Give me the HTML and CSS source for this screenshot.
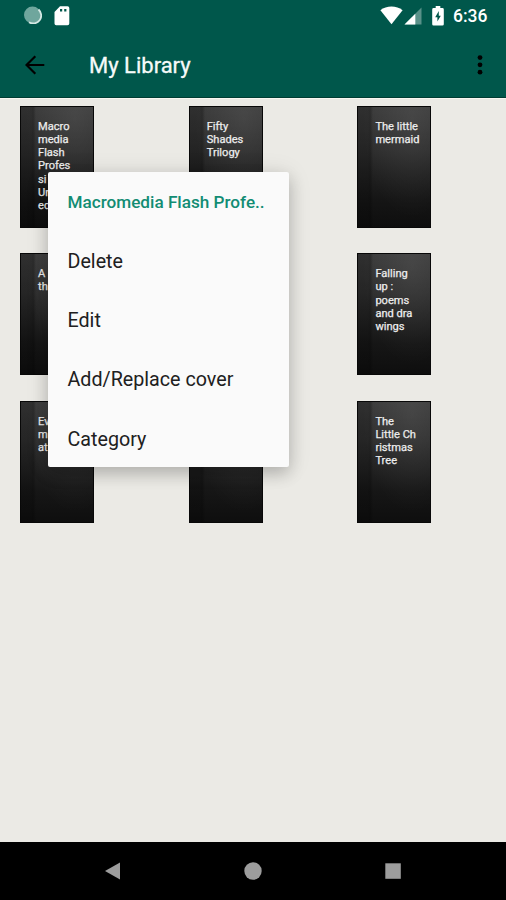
FILE: index.html
```html
<!DOCTYPE html>
<html lang="en">
<head>
<meta charset="utf-8">
<title>My Library</title>
<link rel="stylesheet" href="styles.css">
</head>
<body>
<div class="screen">
  <header class="header">
    <div class="status">
      <svg class="sync" width="18" height="18" viewBox="0 0 18 18"><circle cx="8.500" cy="9" r="8.500" fill="#6fa69d"/><path d="M14.500 3.500A8 8 0 0 1 5 16.300" fill="none" stroke="#d5e8e4" stroke-width="1.800"/></svg>
      <svg class="card" width="16" height="20" viewBox="0 0 16 20"><path fill="#fff" fill-rule="evenodd" d="M6 .3h7.500Q15.300.3 15.300 2v15.500Q15.300 19.300 13.500 19.300H2.200Q.5 19.300.5 17.500V6zM6 3v2.600h2.200V3zM10.200 3v2.600h2.200V3z"/></svg>
      <span class="spacer"></span>
      <svg class="wifi" width="23" height="19" viewBox="0 0 23 19"><path fill="#fff" d="M.4 4.200C6.500-.8 16.500-.8 22.600 4.200L11.500 18.200z"/></svg>
      <svg class="signal" width="18" height="18" viewBox="0 0 18 18"><path fill="#fff" fill-opacity=".35" d="M17.500.5v17H.5z"/><path fill="#fff" d="M11.300 6.700v10.800H.5z"/></svg>
      <svg class="battery" width="12" height="20" viewBox="0 0 12 20"><path fill="#fff" d="M3.700 0h4.600v2H10.400Q11.800 2 11.800 3.400v14.800Q11.800 19.500 10.400 19.500H1.600Q.2 19.500.2 18.200V3.400Q.2 2 1.600 2h2.100z"/><path fill="#00574b" d="M6.800 5 3.200 11.200h2.200V15.500L8.800 9.800H6.800z"/></svg>
      <span class="clock">6:36</span>
    </div>
    <div class="toolbar">
      <svg class="back" width="20" height="20" viewBox="0 0 20 20"><path d="M19.300 10H1.800M10.300 1.200 1.500 10l8.800 8.800" fill="none" stroke="#000" stroke-width="2.200"/></svg>
      <h1 class="title">My Library</h1>
      <svg class="more" width="6" height="20" viewBox="0 0 6 20"><circle cx="3" cy="2.600" r="2.400"/><circle cx="3" cy="9.800" r="2.400"/><circle cx="3" cy="17.200" r="2.400"/></svg>
    </div>
  </header>
  <main class="library">
    <div class="book">Macro<br>media<br>Flash<br>Profes<br>si<br>Un<br>ed</div>
    <div class="book">Fifty<br>Shades<br>Trilogy</div>
    <div class="book">The little<br>mermaid</div>
    <div class="book">A<br>th</div>
    <div class="book"></div>
    <div class="book">Falling<br>up :<br>poems<br>and dra<br>wings</div>
    <div class="book">Ev<br>m<br>at</div>
    <div class="book"></div>
    <div class="book">The<br>Little Ch<br>ristmas<br>Tree</div>
  </main>
  <nav class="navbar">
    <svg width="18" height="18" viewBox="0 0 18 18"><path d="M1 9 16 .5v17z"/></svg>
    <svg width="18" height="18" viewBox="0 0 18 18"><circle cx="9" cy="9" r="8.700"/></svg>
    <svg width="18" height="18" viewBox="0 0 18 18"><path d="M1.300 1.300h15.500v15.500H1.300z"/></svg>
  </nav>
  <div class="menu">
    <div class="item heading"><span>Macromedia Flash Profe..</span></div>
    <div class="item"><span>Delete</span></div>
    <div class="item"><span>Edit</span></div>
    <div class="item"><span>Add/Replace cover</span></div>
    <div class="item"><span>Category</span></div>
  </div>
</div>
</body>
</html>
```
FILE: styles.css
```css
* { box-sizing: border-box; }
body { margin: 0; font-family: Roboto, "Liberation Sans", sans-serif; }
svg { display: block; flex: none; }
.screen {
  position: relative;
  display: flex;
  flex-direction: column;
  width: 506px;
  height: 900px;
  overflow: hidden;
  background: #ebeae5;
}
.header {
  height: 98px;
  flex: none;
  background: #00574b;
  border-bottom: 1px solid #003c32;
}
.status {
  display: flex;
  align-items: flex-start;
  height: 32px;
  padding: 6px 19px 0 24px;
}
.card { margin-left: 12px; }
.spacer { flex: 1; }
.signal { margin: 1px 0 0 1px; }
.battery { margin-left: 10px; }
.clock {
  width: 34px;
  margin-left: 9px;
  font-size: 17.5px;
  font-weight: 500;
  line-height: 20px;
  color: #fff;
  white-space: nowrap;
}
.toolbar {
  display: flex;
  align-items: center;
  height: 65px;
  padding: 0 23px 0 25px;
}
.title {
  flex: 1;
  margin: 0 0 0 44px;
  padding-top: 2px;
  font-size: 22px;
  font-weight: 400;
  line-height: 30px;
  color: #f6faf9;
  -webkit-text-stroke: .3px #f6faf9;
}
.library {
  display: grid;
  grid-template-columns: repeat(3, 168.7px);
  grid-auto-rows: 122px;
  row-gap: 25.5px;
  padding: 7.500px 0 0 20px;
  border-top: 1px solid #f8f7f2;
  margin-bottom: 0;
  flex: 1;
  align-content: start;
}
.book {
  width: 74px;
  margin-top: -1px;
  margin-bottom: 1px;
  padding: 13px 0 0 17px;
  border: 1px solid #080808;
  background:
    linear-gradient(90deg, #0003 0 10px, #0004 12px, transparent 15px),
    radial-gradient(ellipse at 75% 10%, #ffffff12, transparent 65%),
    linear-gradient(#3b3b3b, #2d2d2d 35%, #161616 75%, #0e0e0e);
  color: #ededed;
  font-size: 11.100px;
  line-height: 13.300px;
  white-space: nowrap;
  -webkit-text-stroke: .25px #ededed;
}
.navbar {
  display: flex;
  justify-content: center;
  gap: 122px;
  height: 58px;
  padding-top: 20px;
  background: #000;
  fill: #9d9d9d;
}
.menu {
  position: absolute;
  left: 47.500px;
  top: 171.500px;
  width: 241px;
  height: 295.500px;
  border-radius: 2px;
  background: #fafafa;
  box-shadow: 0 7px 16px #00000030, 0 2px 24px #0000001c;
}
.item {
  display: flex;
  align-items: center;
  height: 59.200px;
  padding: 2.500px 0 0 20px;
  font-size: 19.700px;
  color: #202020;
  white-space: nowrap;
}
.heading {
  font-size: 17.150px;
  font-weight: 500;
  color: #128c73;
}
```
